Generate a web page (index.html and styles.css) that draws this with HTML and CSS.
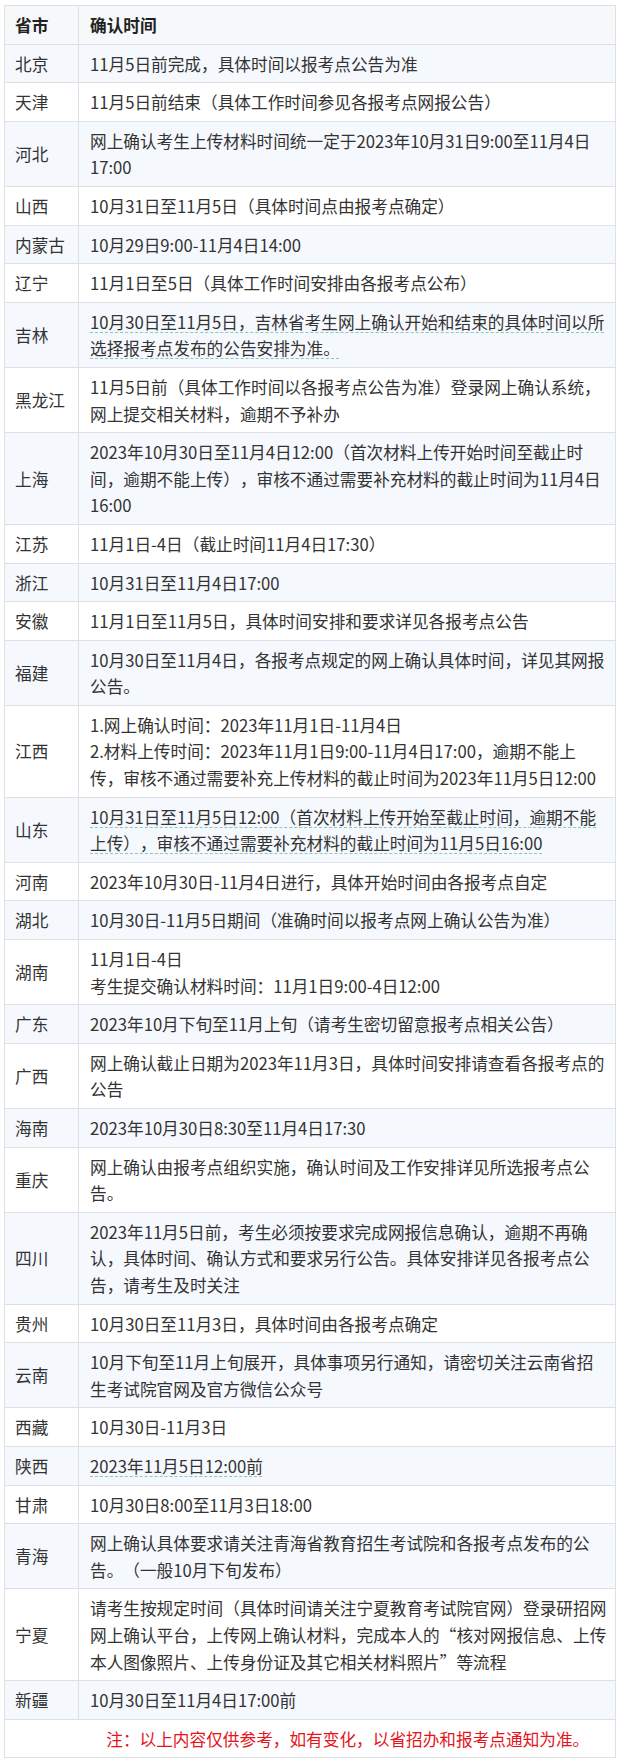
FILE: index.html
```html
<!DOCTYPE html>
<html lang="zh-CN">
<head>
<meta charset="utf-8">
<title>各省网上确认时间</title>
<link rel="stylesheet" href="styles.css">
</head>
<body>
<table class="schedule">
  <colgroup>
    <col class="col-prov">
    <col class="col-time">
  </colgroup>
  <thead>
    <tr><th class="prov">省市</th><th class="time">确认时间</th></tr>
  </thead>
  <tbody>
    <tr><td class="prov">北京</td><td class="time">11月5日前完成，具体时间以报考点公告为准</td></tr>
    <tr><td class="prov">天津</td><td class="time">11月5日前结束（具体工作时间参见各报考点网报公告）</td></tr>
    <tr><td class="prov">河北</td><td class="time">网上确认考生上传材料时间统一定于2023年10月31日9:00至11月4日17:00</td></tr>
    <tr><td class="prov">山西</td><td class="time">10月31日至11月5日（具体时间点由报考点确定）</td></tr>
    <tr><td class="prov">内蒙古</td><td class="time">10月29日9:00-11月4日14:00</td></tr>
    <tr><td class="prov">辽宁</td><td class="time">11月1日至5日（具体工作时间安排由各报考点公布）</td></tr>
    <tr><td class="prov">吉林</td><td class="time"><span class="mark">10月30日至11月5日，吉林省考生网上确认开始和结束的具体时间以所选择报考点发布的公告安排为准。</span></td></tr>
    <tr><td class="prov">黑龙江</td><td class="time">11月5日前（具体工作时间以各报考点公告为准）登录网上确认系统，网上提交相关材料，逾期不予补办</td></tr>
    <tr><td class="prov">上海</td><td class="time">2023年10月30日至11月4日12:00（首次材料上传开始时间至截止时间，逾期不能上传），审核不通过需要补充材料的截止时间为11月4日16:00</td></tr>
    <tr><td class="prov">江苏</td><td class="time">11月1日-4日（截止时间11月4日17:30）</td></tr>
    <tr><td class="prov">浙江</td><td class="time">10月31日至11月4日17:00</td></tr>
    <tr><td class="prov">安徽</td><td class="time">11月1日至11月5日，具体时间安排和要求详见各报考点公告</td></tr>
    <tr><td class="prov">福建</td><td class="time">10月30日至11月4日，各报考点规定的网上确认具体时间，详见其网报公告。</td></tr>
    <tr><td class="prov">江西</td><td class="time">1.网上确认时间：2023年11月1日-11月4日<br>2.材料上传时间：2023年11月1日9:00-11月4日17:00，逾期不能上传，审核不通过需要补充上传材料的截止时间为2023年11月5日12:00</td></tr>
    <tr><td class="prov">山东</td><td class="time"><span class="mark">10月31日至11月5日12:00（首次材料上传开始至截止时间，逾期不能上传），审核不通过需要补充材料的截止时间为11月5日16:00</span></td></tr>
    <tr><td class="prov">河南</td><td class="time">2023年10月30日-11月4日进行，具体开始时间由各报考点自定</td></tr>
    <tr><td class="prov">湖北</td><td class="time">10月30日-11月5日期间（准确时间以报考点网上确认公告为准）</td></tr>
    <tr><td class="prov">湖南</td><td class="time">11月1日-4日<br>考生提交确认材料时间：11月1日9:00-4日12:00</td></tr>
    <tr><td class="prov">广东</td><td class="time">2023年10月下旬至11月上旬（请考生密切留意报考点相关公告）</td></tr>
    <tr><td class="prov">广西</td><td class="time">网上确认截止日期为2023年11月3日，具体时间安排请查看各报考点的公告</td></tr>
    <tr><td class="prov">海南</td><td class="time">2023年10月30日8:30至11月4日17:30</td></tr>
    <tr><td class="prov">重庆</td><td class="time">网上确认由报考点组织实施，确认时间及工作安排详见所选报考点公<br>告。</td></tr>
    <tr><td class="prov">四川</td><td class="time">2023年11月5日前，考生必须按要求完成网报信息确认，逾期不再确认，具体时间、确认方式和要求另行公告。具体安排详见各报考点公告，请考生及时关注</td></tr>
    <tr><td class="prov">贵州</td><td class="time">10月30日至11月3日，具体时间由各报考点确定</td></tr>
    <tr><td class="prov">云南</td><td class="time">10月下旬至11月上旬展开，具体事项另行通知，请密切关注云南省招生考试院官网及官方微信公众号</td></tr>
    <tr><td class="prov">西藏</td><td class="time">10月30日-11月3日</td></tr>
    <tr><td class="prov">陕西</td><td class="time"><span class="mark">2023年11月5日12:00前</span></td></tr>
    <tr><td class="prov">甘肃</td><td class="time">10月30日8:00至11月3日18:00</td></tr>
    <tr><td class="prov">青海</td><td class="time">网上确认具体要求请关注青海省教育招生考试院和各报考点发布的公<br>告。（一般10月下旬发布）</td></tr>
    <tr><td class="prov">宁夏</td><td class="time">请考生按规定时间（具体时间请关注宁夏教育考试院官网）登录研招网网上确认平台，上传网上确认材料，完成本人的“核对网报信息、上传本人图像照片、上传身份证及其它相关材料照片”等流程</td></tr>
    <tr><td class="prov">新疆</td><td class="time">10月30日至11月4日17:00前</td></tr>
  </tbody>
  <tfoot>
    <tr><td colspan="2" class="note">注：以上内容仅供参考，如有变化，以省招办和报考点通知为准。</td></tr>
  </tfoot>
</table>
</body>
</html>
```

FILE: styles.css
```css
html, body {
  margin: 0;
  padding: 0;
  background: #ffffff;
}

body {
  padding: 5px 5px 0 4px;
  font-family: "Microsoft YaHei", "Noto Sans CJK SC", sans-serif;
  font-size: 16.67px;
  color: #333333;
  text-spacing-trim: space-all;
}

.schedule {
  width: 100%;
  border-collapse: collapse;
  table-layout: fixed;
}

.col-prov {
  width: 74px;
}

.schedule th,
.schedule td {
  border: 1px solid #dde1e6;
  padding: 6px 8.5px 5px 11px;
  line-height: 26.6px;
  text-align: left;
  vertical-align: middle;
}

.schedule th.prov,
.schedule td.prov {
  padding-left: 10px;
  padding-right: 4px;
  white-space: nowrap;
}

.schedule thead th {
  background: #f7f8fa;
  font-weight: bold;
  color: #222222;
}

.schedule tbody tr:nth-child(odd) td {
  background: #f5f8fd;
}

.mark {
  text-decoration-line: underline;
  text-decoration-style: dashed;
  text-decoration-color: #8cc8bf;
  text-decoration-thickness: 1px;
  text-underline-offset: 3px;
}

.schedule td.note {
  text-align: center;
  color: #e5141b;
  padding-left: 84px;
  padding-right: 8.5px;
  background: #ffffff;
}
```
